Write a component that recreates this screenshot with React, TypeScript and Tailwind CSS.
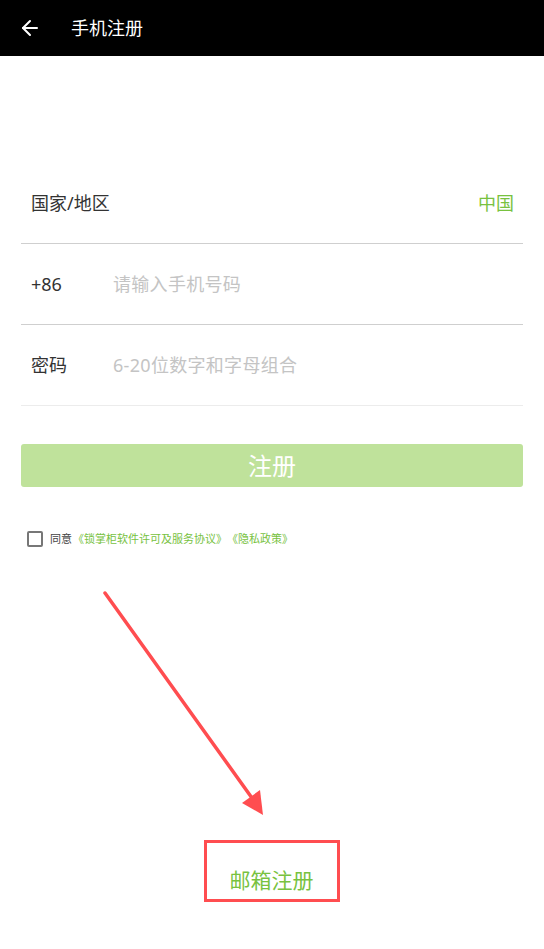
import React from "react";
import { ArrowLeft } from "lucide-react";

const font = { fontFamily: '"Noto Sans", "Noto Sans CJK SC", sans-serif' };

type RowProps = {
  label: string;
  placeholder?: string;
  value?: string;
  light?: boolean;
};

const FormRow = ({ label, placeholder, value, light }: RowProps) => {
  return (
    <div
      className={`flex items-center h-[81px] pl-[10px] pr-[9px] border-b ${
        light ? "border-[#ececec]" : "border-[#cfcfcf]"
      }`}
    >
      <span className="text-[18px] text-[#333] w-[82px] shrink-0">{label}</span>
      {placeholder && (
        <span className="text-[18px] text-[#c4c4c4] tracking-[0.3px]">{placeholder}</span>
      )}
      {value && (
        <span className="ml-auto text-[18px] text-[#78c23f]">{value}</span>
      )}
    </div>
  );
};

export default function App() {
  return (
    <div
      className="relative w-[544px] h-[949px] bg-white overflow-hidden flex flex-col"
      style={font}
    >
      <header className="h-14 bg-black flex items-center shrink-0">
        <ArrowLeft className="ml-[18px] text-white" size={24} strokeWidth={2} />
        <h1 className="ml-[29px] text-[18px] text-white font-normal">手机注册</h1>
      </header>

      <section className="px-[21px] pt-[107px] flex flex-col">
        <div className="flex flex-col">
          <FormRow label="国家/地区" value="中国" />
          <FormRow label="+86" placeholder="请输入手机号码" />
          <FormRow label="密码" placeholder="6-20位数字和字母组合" light />
        </div>

        <button className="mt-[38px] h-[43px] rounded-[3px] bg-[#bfe29b] text-white text-[24px] flex items-center justify-center">
          注册
        </button>

        <div className="mt-[44px] flex items-center pl-[6px]">
          <span className="w-4 h-4 border-2 border-[#777] rounded-[2px] shrink-0" />
          <span className="ml-[7px] text-[11px] text-[#444]">同意</span>
          <span className="ml-[1px] text-[11px] text-[#78c23f] [text-spacing-trim:space-all]">
            《锁掌柜软件许可及服务协议》《隐私政策》
          </span>
        </div>
      </section>

      <div className="mt-auto mb-[47px] flex justify-center">
        <div className="border-[3px] border-[#ff4d50] w-[136px] pt-[26px] pb-[8px] flex justify-center ml-[-1px]">
          <span className="text-[21px] leading-[22px] text-[#78c23f]">邮箱注册</span>
        </div>
      </div>

      {/* annotation arrow */}
      <svg
        className="absolute left-0 top-0 pointer-events-none"
        width={544}
        height={949}
        viewBox="0 0 544 949"
      >
        <line
          x1={105}
          y1={593}
          x2={252}
          y2={798}
          stroke="#ff4d50"
          strokeWidth={3.5}
          strokeLinecap="round"
        />
        <polygon points="263,815 242,803 260,790" fill="#ff4d50" />
      </svg>
    </div>
  );
}
